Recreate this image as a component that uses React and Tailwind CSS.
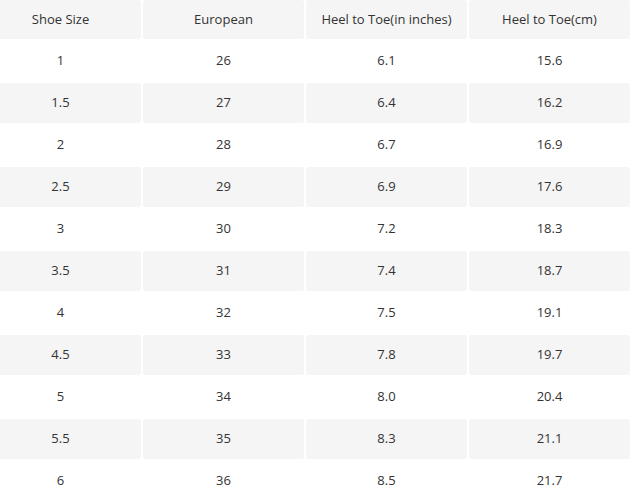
import React from "react";

const rows = [
  ["1", "26", "6.1", "15.6"],
  ["1.5", "27", "6.4", "16.2"],
  ["2", "28", "6.7", "16.9"],
  ["2.5", "29", "6.9", "17.6"],
  ["3", "30", "7.2", "18.3"],
  ["3.5", "31", "7.4", "18.7"],
  ["4", "32", "7.5", "19.1"],
  ["4.5", "33", "7.8", "19.7"],
  ["5", "34", "8.0", "20.4"],
  ["5.5", "35", "8.3", "21.1"],
  ["6", "36", "8.5", "21.7"],
];

const header = ["Shoe Size", "European", "Heel to Toe(in inches)", "Heel to Toe(cm)"];

export default function App() {
  return (
    <div className="w-[634px] h-[502px] overflow-hidden bg-white text-[13px] text-[#333] font-['Open_Sans',sans-serif]">
      <div className="ml-[-20px] w-[650px] grid grid-cols-[161px_161px_161px_161px] gap-x-[2px] gap-y-[2px]">
        {header.map((h, i) => (
          <div key={i} className="h-[39px] bg-[#f5f5f5] rounded-[3px] flex items-center justify-center">
            {h}
          </div>
        ))}
        {rows.map((r, ri) =>
          r.map((c, ci) => (
            <div
              key={ri + "-" + ci}
              className={
                "h-[40px] rounded-[3px] flex items-center justify-center " +
                (ri % 2 === 1 ? "bg-[#f5f5f5]" : "bg-white")
              }
            >
              {c}
            </div>
          ))
        )}
      </div>
    </div>
  );
}
